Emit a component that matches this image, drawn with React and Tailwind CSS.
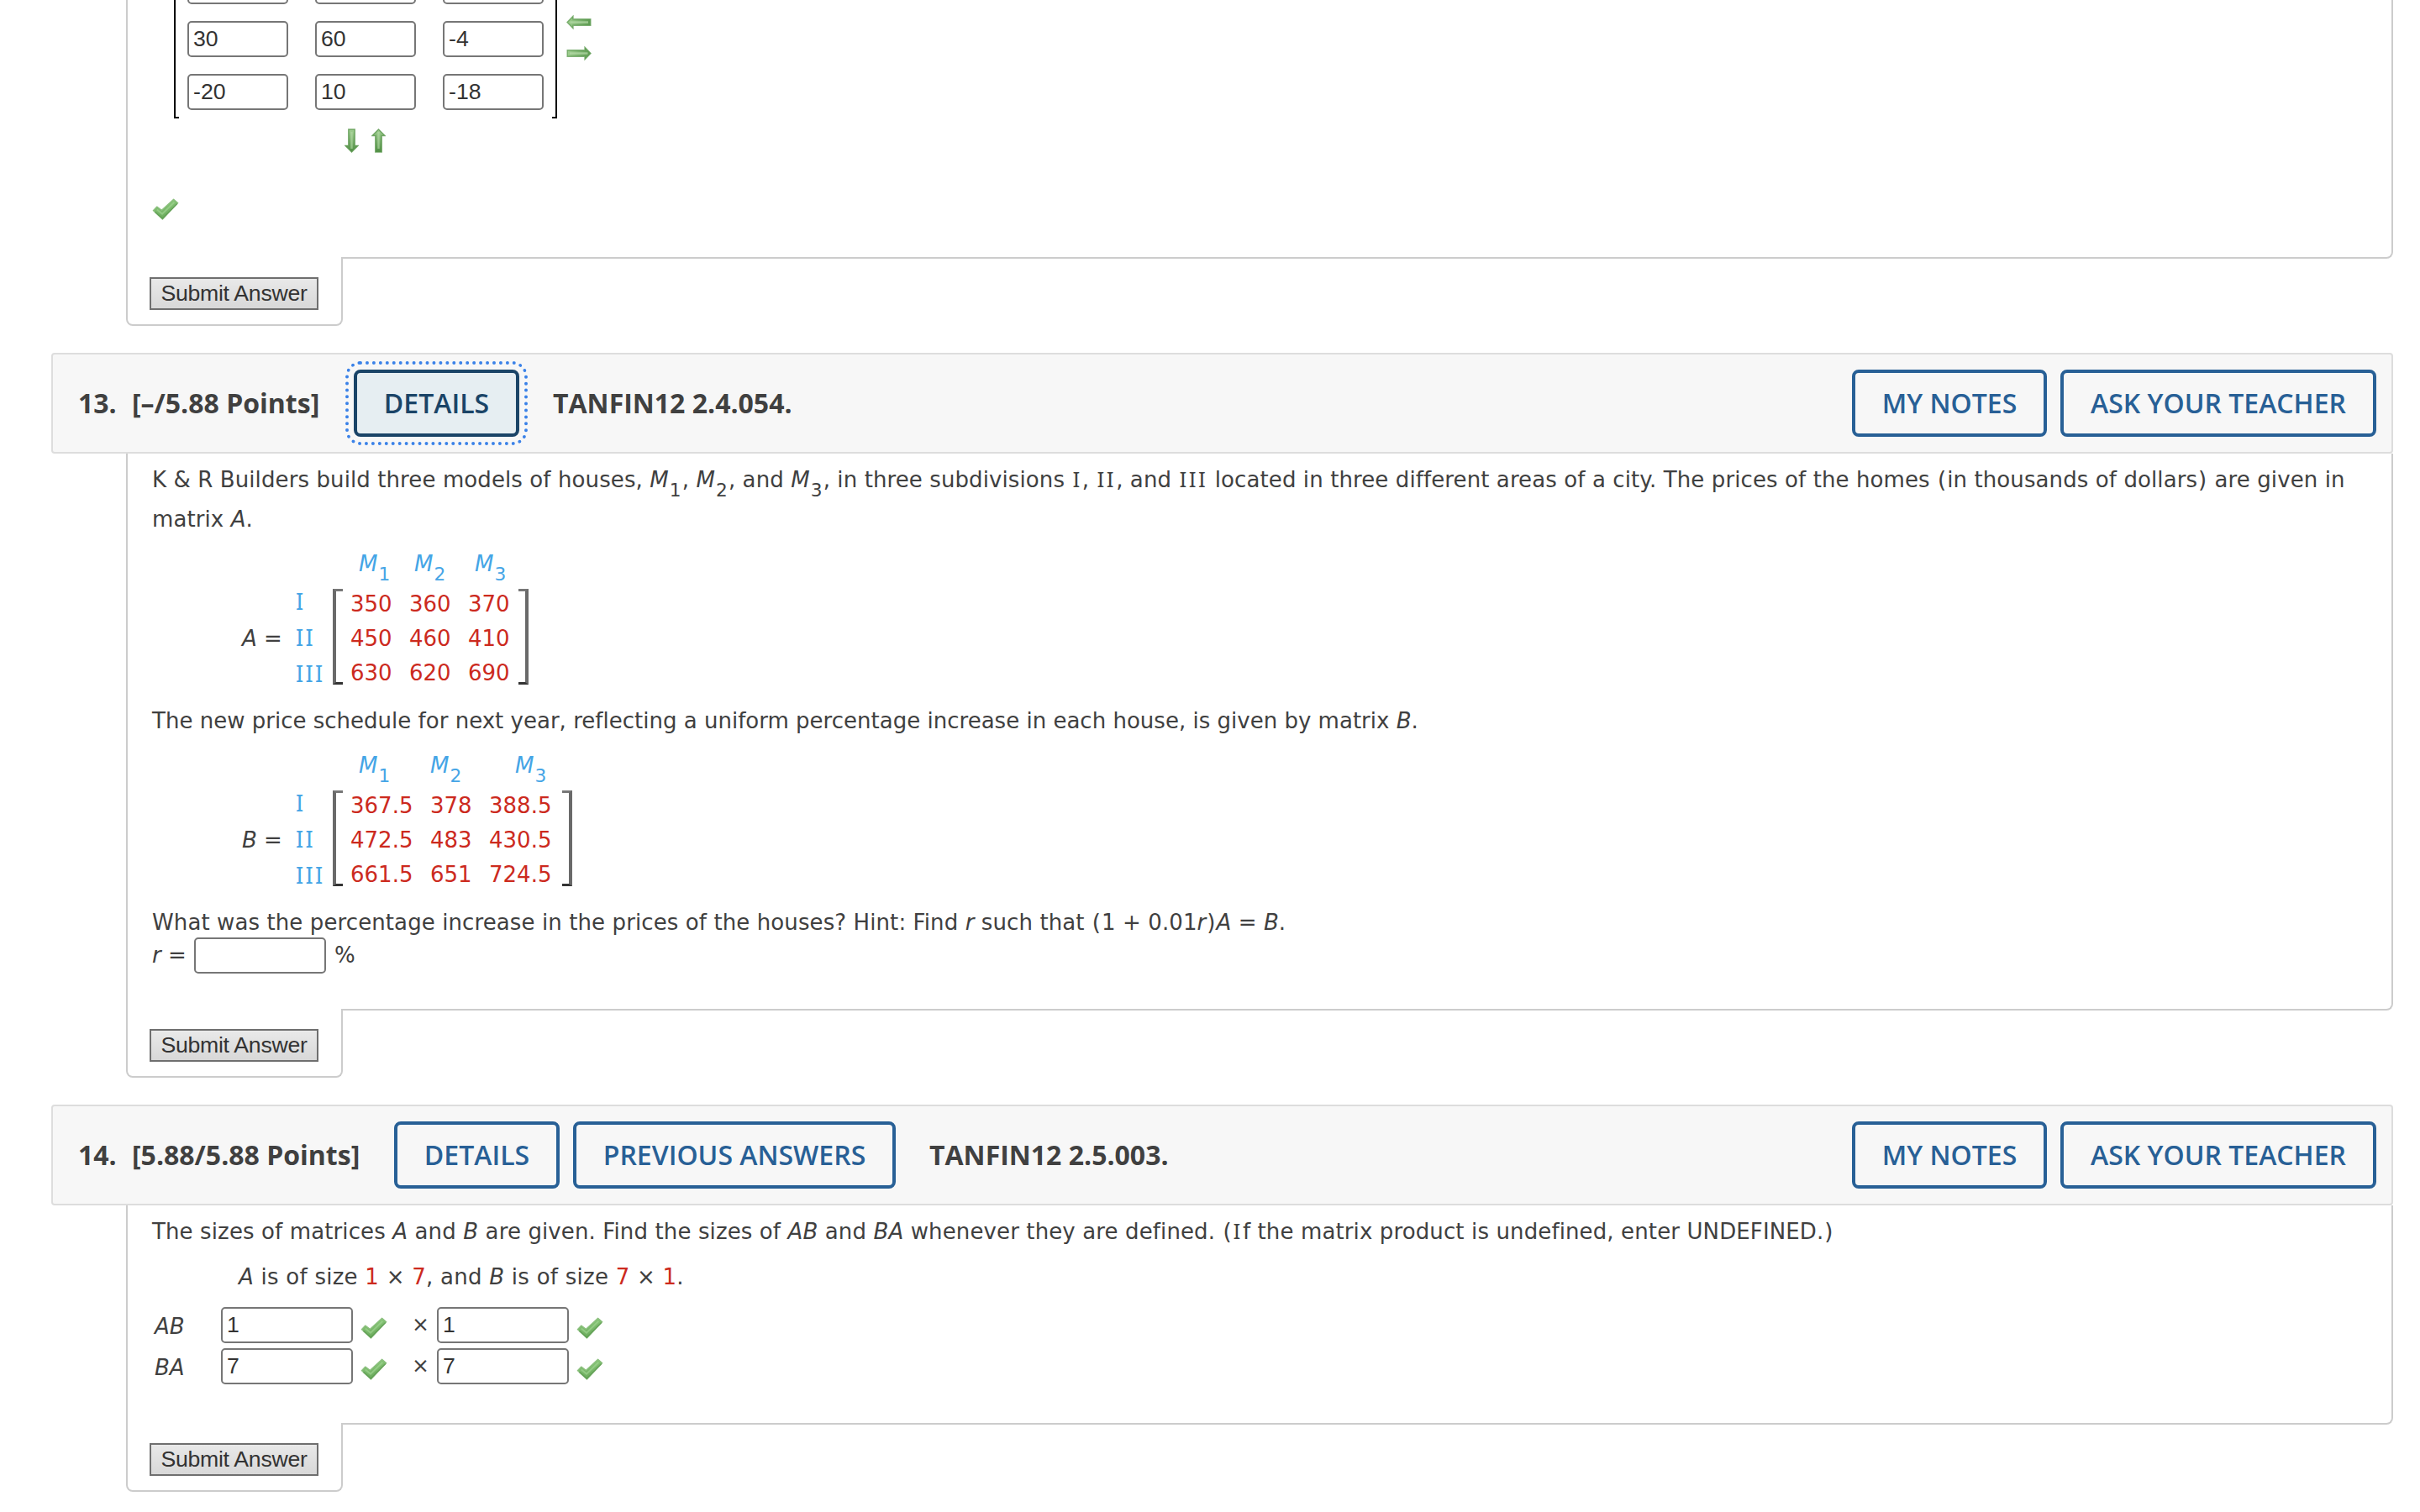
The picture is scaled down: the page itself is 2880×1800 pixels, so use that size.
const SANS = "font-['DejaVu_Sans','Liberation_Sans',sans-serif]";
const OPEN = "font-['Open_Sans',sans-serif]";

/* ---------- text helpers ---------- */

function I({ n = 1 }) {
  return (
    <span className="font-['Noto_Sans',sans-serif] text-[26px] leading-none tracking-[2.5px] pl-[1px]">
      {"I".repeat(n)}
    </span>
  );
}

function Sub({ children }) {
  return <span className="relative top-[11px] pr-[1px] pl-[1px] text-[21.67px] leading-none">{children}</span>;
}

function M({ n }) {
  return (
    <>
      <i>M</i>
      <Sub>{n}</Sub>
    </>
  );
}

function Paren({ children }) {
  return <span className="px-[0.9px]">{children}</span>;
}

function Red({ children }) {
  return <span className="text-[#cc2a1e]">{children}</span>;
}

function Line({ className = "tracking-[0.1px]", children }) {
  return <p className={`h-[47px] pl-[29px] leading-[49px] whitespace-nowrap ${className}`}>{children}</p>;
}

/* ---------- icons ---------- */

const arrowTurn = {
  left: "",
  right: "rotate(180 15 8.5)",
};

function HArrow({ dir }) {
  return (
    <svg width="30" height="17" viewBox="0 0 30 17">
      <defs>
        <linearGradient id={`h-${dir}`} x1="0" x2="1" y1="0" y2="0">
          <stop offset="0" stopColor={dir === "left" ? "#9fce90" : "#5c9a50"} />
          <stop offset="1" stopColor={dir === "left" ? "#5c9a50" : "#9fce90"} />
        </linearGradient>
      </defs>
      <g transform={arrowTurn[dir]}>
        <path
          d="M1 8.5 L8 1.2 V4.8 H28.8 V12.2 H8 V15.8 Z"
          fill={`url(#h-${dir})`}
          stroke="#5f9c53"
          strokeOpacity="0.75"
          strokeWidth="1.4"
        />
        <path d="M4.5 8.5 H26" stroke="#b6dca9" strokeOpacity="0.7" strokeWidth="2.4" />
      </g>
    </svg>
  );
}

function VArrow({ dir }) {
  return (
    <svg width="17" height="29" viewBox="0 0 17 29">
      <defs>
        <linearGradient id={`v-${dir}`} x1="0" x2="0" y1="0" y2="1">
          <stop offset="0" stopColor="#a2d093" />
          <stop offset="1" stopColor="#4f8d43" />
        </linearGradient>
      </defs>
      <path
        d={
          dir === "down"
            ? "M4.8 1 H12.2 V20.5 H16 L8.5 28 L1 20.5 H4.8 Z"
            : "M8.5 1 L16 8.5 H12.2 V28 H4.8 V8.5 H1 Z"
        }
        fill={`url(#v-${dir})`}
        stroke="#5a974d"
        strokeOpacity="0.8"
        strokeWidth="1.4"
      />
      <path d="M8.5 4 V24" stroke="#b6dca9" strokeOpacity="0.6" strokeWidth="2.4" />
    </svg>
  );
}

function Check({ className = "" }) {
  return (
    <svg width="32" height="26" viewBox="0 0 32 26" className={`shrink-0 ${className}`}>
      <defs>
        <linearGradient id="tick" x1="0.3" x2="0.6" y1="0" y2="1">
          <stop offset="0" stopColor="#8fcb7f" />
          <stop offset="1" stopColor="#67a859" />
        </linearGradient>
      </defs>
      <path
        d="M1.3 14.6 L5.8 10 L11.4 14.2 L25.6 1.2 L30.8 5.6 L12.4 25 Z"
        fill="url(#tick)"
        stroke="#8cc07f"
        strokeWidth="1.2"
        strokeLinejoin="round"
      />
      <path d="M5.8 13.4 L12 18.6 L26.4 4.8" fill="none" stroke="#9dd38e" strokeOpacity="0.7" strokeWidth="2" />
      <path d="M3.4 16.4 L12.4 24.2 L29.8 6.4" fill="none" stroke="#4e8f42" strokeOpacity="0.6" strokeWidth="1.4" />
    </svg>
  );
}

/* ---------- controls ---------- */

function Field({ value = "", className = "" }) {
  return (
    <div
      className={`h-[43px] shrink-0 rounded-[5px] border-2 border-[#767676] bg-white pl-[5px] font-['Liberation_Sans',sans-serif] text-[26.67px] leading-[39px] text-[#333] ${className}`}
    >
      {value}
    </div>
  );
}

function HeaderButton({ focused = false, className = "", children }) {
  const tone = focused
    ? "border-[#1a4467] bg-[#e6eef2] text-[#1a4467] outline-4 outline-dotted outline-offset-[6px] outline-[#3b82e8]"
    : "border-[#286096] text-[#286096]";
  return (
    <button
      className={`flex h-[80px] shrink-0 items-center justify-center rounded-[8px] border-4 font-semibold whitespace-nowrap ${tone} ${className}`}
    >
      {children}
    </button>
  );
}

function Header({ number, points, pointsClass, title, children }) {
  return (
    <header
      className={`mt-8 ml-[61px] flex h-[120px] w-[2787px] items-center rounded-[4px] border-2 border-[#ddd] bg-[#f7f7f7] pr-[18px] pl-[30px] text-[32px] font-bold text-[#404040] ${OPEN}`}
    >
      <span className="w-[64px] shrink-0">{number}</span>
      <span className={`shrink-0 whitespace-nowrap ${pointsClass}`}>{points}</span>
      <div className="flex gap-4">{children}</div>
      <span className="ml-10 whitespace-nowrap">{title}</span>
      <div className="ml-auto flex gap-4">
        <HeaderButton className="w-[232px]">MY NOTES</HeaderButton>
        <HeaderButton className="w-[376px]">ASK YOUR TEACHER</HeaderButton>
      </div>
    </header>
  );
}

function Panel({ className = "", children }) {
  return (
    <section className="ml-[150px] w-[2698px]">
      <div className={`rounded-br-[8px] border-x-2 border-b-2 border-[#ccc] ${className}`}>{children}</div>
      <div className="relative -mt-[2px] h-[82px] w-[258px] rounded-b-[8px] border-x-2 border-b-2 border-[#ccc] bg-white pt-[24px] pl-[26px]">
        <button className="flex h-[39px] w-[201px] items-center justify-center border-2 border-[#6f6f6f] bg-linear-to-b from-[#e9e9e9] to-[#d8d8d8] pb-px font-['Liberation_Sans',sans-serif] text-[26.67px] leading-[35px] tracking-[-0.28px] whitespace-nowrap text-[#333]">
          Submit Answer
        </button>
      </div>
    </section>
  );
}

/* ---------- matrices ---------- */

function Bracket({ side }) {
  return (
    <div
      className={`h-[114px] w-[12px] shrink-0 border-t-[3px] border-b-[3px] border-t-[#777] border-b-[#333] ${
        side === "left" ? "border-l-[4px] border-l-[#6a6a6a]" : "border-r-[4px] border-r-[#6a6a6a]"
      }`}
    />
  );
}

function MatrixBlock({ name, heads, cols, rows }) {
  return (
    <div className="h-[193px] pt-[5px]">
      <div className="flex h-[50px] pl-[275px] leading-[50px] text-[#45a5e6]">
        {heads.map((w, i) => (
          <span key={i} className={`shrink-0 whitespace-nowrap ${w}`}>
            <M n={i + 1} />
          </span>
        ))}
      </div>
      <div className="mt-[5px] flex h-[114px] pl-[136px]">
        <div className="w-[64px] shrink-0 leading-[118px] whitespace-nowrap">
          <i>{name}</i> =
        </div>
        <div className="-mt-[7px] w-[44px] shrink-0 font-['Noto_Sans',sans-serif] text-[27px] leading-[43px] tracking-[2.3px] text-[#45a5e6]">
          <div>I</div>
          <div>II</div>
          <div>III</div>
        </div>
        <Bracket side="left" />
        <div className="-mt-[2px] ml-[9px] text-[#cc2a1e]">
          {rows.map((row) => (
            <div key={row[0]} className="flex h-[41px] leading-[41px]">
              {row.map((v, i) => (
                <span key={v} className={`shrink-0 ${cols[i]}`}>
                  {v}
                </span>
              ))}
            </div>
          ))}
        </div>
        <Bracket side="right" />
      </div>
    </div>
  );
}

const answers = [
  ["30", "60", "-4"],
  ["-20", "10", "-18"],
];

function SizeRow({ name, value }) {
  return (
    <div className="flex h-[43px] pl-[32px]">
      <i className="w-[79px] shrink-0 leading-[47px]">{name}</i>
      <Field value={value} className="w-[157px]" />
      <Check className="mt-[12px] ml-[9px]" />
      <span className="ml-[29px] w-[31px] text-[25px] leading-[42px]">×</span>
      <Field value={value} className="-ml-[1px] w-[157px]" />
      <Check className="mt-[12px] ml-[9px]" />
    </div>
  );
}

export default function App() {
  return (
    <main className={`h-[1800px] w-[2880px] overflow-hidden bg-white text-[26px] text-[#404040] ${SANS}`}>
      <Panel className="h-[308px] overflow-hidden">
        <div className="flex pl-[55px]">
          <div className="h-[141px] w-[6px] border-b-2 border-l-2 border-black" />
          <div className="-mt-[38px] mr-[10px] ml-[10px] grid grid-cols-[120px_120px_120px] content-start gap-x-[32px] gap-y-[20px]">
            <Field />
            <Field />
            <Field />
            {answers.flat().map((v) => (
              <Field key={v} value={v} />
            ))}
          </div>
          <div className="h-[141px] w-[6px] border-r-2 border-b-2 border-black" />
          <div className="flex flex-col gap-[20px] pt-[18px] pl-[11px]">
            <HArrow dir="left" />
            <HArrow dir="right" />
          </div>
        </div>
        <div className="mt-[12px] flex gap-[15px] pl-[258px]">
          <VArrow dir="down" />
          <VArrow dir="up" />
        </div>
        <Check className="mt-[54px] ml-[29px]" />
      </Panel>

      <Header number="13." points="[–/5.88 Points]" pointsClass="w-[264px]" title="TANFIN12 2.4.054.">
        <HeaderButton focused className="w-[197px]">
          DETAILS
        </HeaderButton>
      </Header>
      <Panel className="h-[663px] pt-[7px]">
        <Line>
          K &amp; R Builders build three models of houses, <M n={1} />, <M n={2} />, and <M n={3} />, in three
          subdivisions <I />, <I n={2} />, and <I n={3} /> located in three different areas of a city. The prices of the
          homes <Paren>(</Paren>in thousands of dollars<Paren>)</Paren> are given in
        </Line>
        <Line>
          matrix <i>A</i>.
        </Line>
        <MatrixBlock
          name="A"
          heads={["w-[66px]", "w-[72px]", "w-[60px]"]}
          cols={["w-[70px]", "w-[70px]", "w-[60px]"]}
          rows={[
            ["350", "360", "370"],
            ["450", "460", "410"],
            ["630", "620", "690"],
          ]}
        />
        <Line className="tracking-[0.01px]">
          The new price schedule for next year, reflecting a uniform percentage increase in each house, is given by
          matrix <i>B</i>.
        </Line>
        <MatrixBlock
          name="B"
          heads={["w-[85px]", "w-[101px]", "w-[60px]"]}
          cols={["w-[95px]", "w-[70px]", "w-[87px]"]}
          rows={[
            ["367.5", "378", "388.5"],
            ["472.5", "483", "430.5"],
            ["661.5", "651", "724.5"],
          ]}
        />
        <Line>
          What was the percentage increase in the prices of the houses? Hint: Find <i>r</i> such that{" "}
          <Paren>(</Paren>1 + 0.01<i>r</i>
          <Paren>)</Paren>
          <i>A</i> = <i>B</i>.
        </Line>
        <div className="-mt-[5px] flex h-[43px] pl-[29px] leading-[43px]">
          <span className="w-[50px] shrink-0 whitespace-nowrap">
            <i>r</i> =
          </span>
          <Field className="w-[157px]" />
          <span className="ml-[10px]">%</span>
        </div>
      </Panel>

      <Header number="14." points="[5.88/5.88 Points]" pointsClass="w-[312px]" title="TANFIN12 2.5.003.">
        <HeaderButton className="w-[197px]">DETAILS</HeaderButton>
        <HeaderButton className="w-[384px]">PREVIOUS ANSWERS</HeaderButton>
      </Header>
      <Panel className="h-[261px] pt-[7px]">
        <Line className="tracking-[0.12px]">
          The sizes of matrices <i>A</i> and <i>B</i> are given. Find the sizes of <i>AB</i> and <i>BA</i> whenever they
          are defined. <Paren>(</Paren>
          <I />f the matrix product is undefined, enter UNDEFINED.<Paren>)</Paren>
        </Line>
        <div className="mt-[7px] pl-[103px]">
          <Line className="tracking-[0.25px]">
            <i>A</i> is of size <Red>1</Red> × <Red>7</Red>, and <i>B</i> is of size <Red>7</Red> × <Red>1</Red>.
          </Line>
        </div>
        <div className="mt-[13px] flex flex-col gap-[6px]">
          <SizeRow name="AB" value="1" />
          <SizeRow name="BA" value="7" />
        </div>
      </Panel>
    </main>
  );
}
